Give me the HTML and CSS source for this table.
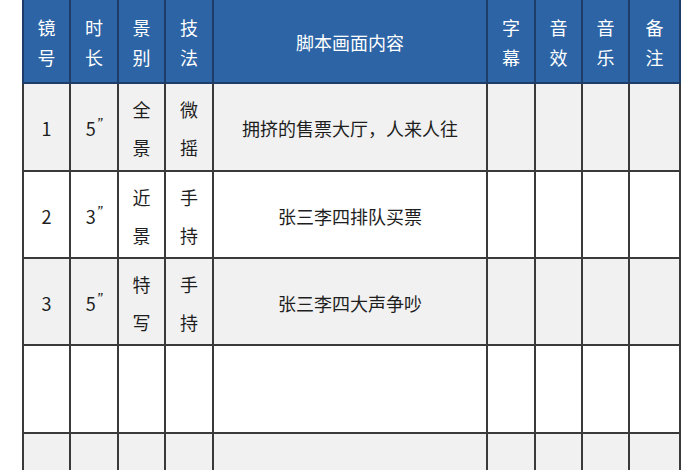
FILE: index.html
```html
<!DOCTYPE html>
<html lang="zh-CN">
<head>
<meta charset="utf-8">
<title>分镜脚本</title>
<link rel="stylesheet" href="styles.css">
</head>
<body>
<table class="script">
  <colgroup>
    <col class="c-no"><col class="c-dur"><col class="c-shot"><col class="c-tech">
    <col class="c-content"><col class="c-sub"><col class="c-sfx"><col class="c-music"><col class="c-note">
  </colgroup>
  <thead>
    <tr>
      <th>镜<br>号</th>
      <th>时<br>长</th>
      <th>景<br>别</th>
      <th>技<br>法</th>
      <th>脚本画面内容</th>
      <th>字<br>幕</th>
      <th>音<br>效</th>
      <th>音<br>乐</th>
      <th>备<br>注</th>
    </tr>
  </thead>
  <tbody>
    <tr class="odd r1">
      <td>1</td><td>5<span class="q">”</span></td><td>全<br>景</td><td>微<br>摇</td>
      <td>拥挤的售票大厅，人来人往</td><td></td><td></td><td></td><td></td>
    </tr>
    <tr class="even r2">
      <td>2</td><td>3<span class="q">”</span></td><td>近<br>景</td><td>手<br>持</td>
      <td>张三李四排队买票</td><td></td><td></td><td></td><td></td>
    </tr>
    <tr class="odd r3">
      <td>3</td><td>5<span class="q">”</span></td><td>特<br>写</td><td>手<br>持</td>
      <td>张三李四大声争吵</td><td></td><td></td><td></td><td></td>
    </tr>
    <tr class="even r4">
      <td></td><td></td><td></td><td></td><td></td><td></td><td></td><td></td><td></td>
    </tr>
    <tr class="odd r5">
      <td></td><td></td><td></td><td></td><td></td><td></td><td></td><td></td><td></td>
    </tr>
  </tbody>
</table>
</body>
</html>
```

FILE: styles.css
```css
html, body {
  margin: 0;
  padding: 0;
  background: #ffffff;
  overflow: hidden;
  height: 470px;
}

body {
  font-family: "Noto Sans CJK SC", "Noto Sans", sans-serif;
  font-size: 18px;
  color: #1e1e1e;
}

.script {
  border-collapse: collapse;
  table-layout: fixed;
  width: 657px;
  margin-left: 22px;
}

.c-no { width: 47px; }
.c-dur { width: 48px; }
.c-shot { width: 47px; }
.c-tech { width: 48px; }
.c-content { width: 274px; }
.c-sub { width: 48px; }
.c-sfx { width: 47px; }
.c-music { width: 47px; }
.c-note { width: 51px; }

.script th {
  background: #2c64a5;
  color: #ffffff;
  font-weight: normal;
  line-height: 30px;
  height: 80px;
  padding: 2px 0 0;
  text-align: center;
  vertical-align: middle;
  border: 2px solid #1d3c68;
  border-top: none;
}

.script td {
  border: 2px solid #3a3a3a;
  padding: 2px 0 0;
  text-align: center;
  vertical-align: middle;
  line-height: 38px;
}

.odd td { background: #f1f1f1; }
.even td { background: #ffffff; }

.r1 td { height: 84px; }
.r2 td { height: 83px; }
.r3 td { height: 83px; }
.r4 td { height: 84px; }
.r5 td { height: 84px; }

.q {
  font-family: "Liberation Sans", sans-serif;
  font-size: 16px;
  vertical-align: top;
  line-height: 32px;
  font-style: italic;
  margin-left: 1px;
}
```
